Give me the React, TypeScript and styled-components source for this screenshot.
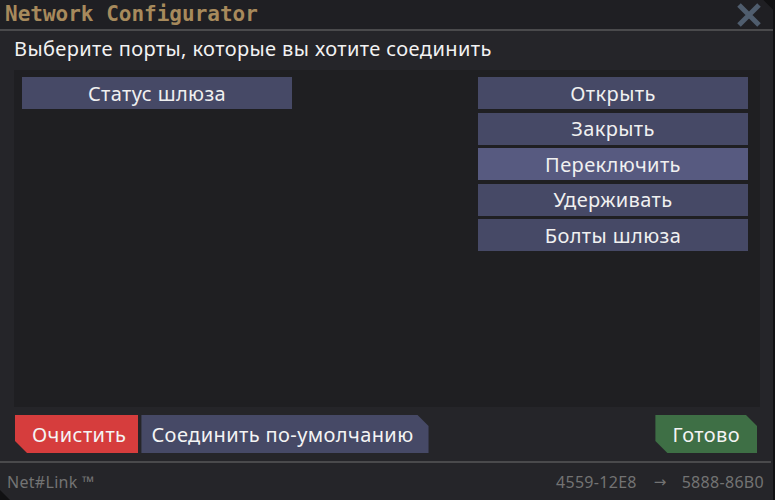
import React from 'react';
import styled, { createGlobalStyle } from 'styled-components';

const GlobalStyle = createGlobalStyle`
    html, body {
        margin: 0;
        padding: 0;
        background: #111113;
    }
    body {
        font-family: "Noto Sans", "Open Sans", sans-serif;
    }
`

const Window = styled.div`
    width: 773px;
    height: 500px;
    display: flex;
    flex-direction: column;
    background: #252529;
    clip-path: polygon(0 0, 763px 0, 773px 10px, 773px 100%, 10px 100%, 0 490px);
`

const TitleBar = styled.div`
    height: 29px;
    display: flex;
    align-items: center;
    justify-content: space-between;
    padding: 0 11px 0 5px;
    background: #1f1f23;
    border-bottom: 2px solid #4a4a4c;
`

const Title = styled.div`
    font-family: "DejaVu Sans Mono", monospace;
    font-weight: bold;
    font-size: 21px;
    color: #a78a5c;
    line-height: 29px;
`

const Close = styled.svg`
    width: 26px;
    height: 26px;
    margin-top: 1px;
`

const Body = styled.div`
    flex: 1;
    display: flex;
    flex-direction: column;
    padding: 0 13px 6px 14px;
    letter-spacing: 0.4px;
`

const Prompt = styled.div`
    color: #f2f2f2;
    font-size: 20px;
    line-height: 36px;
    height: 39px;
`

const Panel = styled.div`
    height: 337px;
    display: flex;
    justify-content: space-between;
    padding: 7px 12px 0 8px;
    background: #1f1f22;
    box-sizing: border-box;
`

const Column = styled.div`
    width: 270px;
    display: flex;
    flex-direction: column;
    gap: 3.5px;
`

const Item = styled.div<{ $active?: boolean }>`
    height: 32px;
    display: flex;
    align-items: center;
    justify-content: center;
    background: ${p => p.$active ? '#575a80' : '#464966'};
    color: #f0f0f0;
    font-size: 20px;
`

const Actions = styled.div`
    margin-top: 8px;
    display: flex;
    align-items: center;
    gap: 3px;
    padding: 0 3px 0 1px;
`

const Spacer = styled.div`
    flex: 1;
`

const Btn = styled.div<{ $color: string; $cut: 'bl' | 'tr' | 'both' }>`
    height: 38px;
    display: flex;
    align-items: center;
    padding: 0 17px;
    background: ${p => p.$color};
    color: #f4f4f4;
    font-size: 20px;
    clip-path: ${p =>
        p.$cut === 'bl'
            ? 'polygon(0 0, 100% 0, 100% 100%, 12px 100%, 0 calc(100% - 12px))'
            : p.$cut === 'tr'
            ? 'polygon(0 0, calc(100% - 11px) 0, 100% 11px, 100% 100%, 0 100%)'
            : 'polygon(0 0, calc(100% - 11px) 0, 100% 11px, 100% 100%, 12px 100%, 0 calc(100% - 12px))'};
`

const ClearBtn = styled(Btn)`
    padding: 0 12px 0 17px;
`

const DefaultBtn = styled(Btn)`
    padding: 0 15px 0 10px;
`

const Footer = styled.div`
    height: 37px;
    display: flex;
    align-items: center;
    justify-content: space-between;
    padding: 0 7px 0 7px;
    border-top: 2px solid #4a4a4c;
    color: #737373;
    font-size: 16px;
    letter-spacing: 0.3px;
    margin-right: 2px;
`

const Route = styled.div`
    display: flex;
    align-items: center;
    gap: 15px;
`

const Arrow = styled.span`
    font-family: "DejaVu Sans", sans-serif;
    font-size: 15px;
    margin-left: 2px;
`

const App: React.FC = () => (
    <>
        <GlobalStyle />
        <Window>
            <TitleBar>
                <Title>Network Configurator</Title>
                <Close viewBox="0 0 26 26">
                    <path d="M3 3 L23 23 M23 3 L3 23" stroke="#4f5d6e" strokeWidth="5" strokeLinecap="butt" />
                </Close>
            </TitleBar>
            <Body>
                <Prompt>Выберите порты, которые вы хотите соединить</Prompt>
                <Panel>
                    <Column>
                        <Item>Статус шлюза</Item>
                    </Column>
                    <Column>
                        <Item>Открыть</Item>
                        <Item>Закрыть</Item>
                        <Item $active>Переключить</Item>
                        <Item>Удерживать</Item>
                        <Item>Болты шлюза</Item>
                    </Column>
                </Panel>
                <Actions>
                    <ClearBtn $color="#d63d3d" $cut="bl">Очистить</ClearBtn>
                    <DefaultBtn $color="#464966" $cut="tr">Соединить по-умолчанию</DefaultBtn>
                    <Spacer />
                    <Btn $color="#3e6f45" $cut="both">Готово</Btn>
                </Actions>
            </Body>
            <Footer>
                <span>Net#Link ™</span>
                <Route>
                    <span>4559-12E8</span>
                    <Arrow>→</Arrow>
                    <span>5888-86B0</span>
                </Route>
            </Footer>
        </Window>
    </>
);

export default App;
